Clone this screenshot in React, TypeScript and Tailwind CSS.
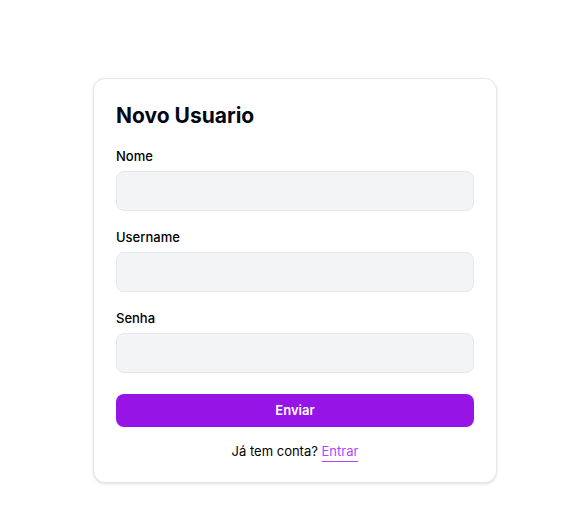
import React from "react";

interface Field {
  id: number;
  label: string;
  type: string;
}

const fields: Field[] = [
  { id: 1, label: "Nome", type: "text" },
  { id: 2, label: "Username", type: "text" },
  { id: 3, label: "Senha", type: "password" },
];

const App: React.FC = () => {
  return (
    <div className="min-h-screen bg-white font-['Inter',sans-serif] text-black">
      <div className="flex pl-[93px] pt-[78px]">
        <div className="w-[404px] rounded-xl border border-gray-200 bg-white px-[22px] pt-[20px] pb-[21px] shadow-sm">
          <h1 className="mb-[13px] text-[21px] leading-[34px] font-bold text-gray-950">
            Novo Usuario
          </h1>

          <form onSubmit={(e) => e.preventDefault()}>
            {fields.map((field) => (
              <div key={field.id} className="mb-[16px]">
                <label className="mb-[5px] block text-[13px] leading-[20px] font-medium">
                  {field.label}
                </label>
                <input
                  type={field.type}
                  className="block h-[40px] w-full rounded-lg border border-gray-200 bg-gray-100 px-3 outline-none"
                />
              </div>
            ))}

            <button
              type="submit"
              className="mt-[5px] h-[33px] w-full rounded-lg bg-[#9614e6] text-[13px] font-semibold text-white"
            >
              Enviar
            </button>
          </form>

          <p className="mt-[14px] text-center text-[13px] leading-[20px]">
            Já tem conta?{" "}
            <a href="#" className="border-b border-purple-500 pb-[2px] text-purple-500">
              Entrar
            </a>
          </p>
        </div>
      </div>
    </div>
  );
};

export default App;
